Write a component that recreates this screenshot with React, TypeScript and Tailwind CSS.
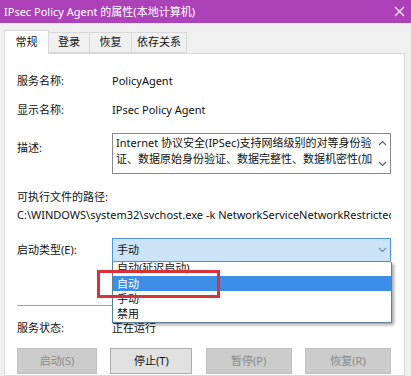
import React from "react";

const font = { fontFamily: '"Noto Sans", "Noto Sans CJK SC", sans-serif' };

const Chevron: React.FC<{ up?: boolean; color?: string }> = ({ up, color = "#606060" }) => (
  <svg width="9" height="6" viewBox="0 0 9 6">
    <path
      d={up ? "M1 5 L4.5 1.5 L8 5" : "M1 1 L4.5 4.5 L8 1"}
      fill="none"
      stroke={color}
      strokeWidth="1.1"
    />
  </svg>
);

const App: React.FC = () => {
  const tabs = [
    { label: "常规", w: "w-[45px]" },
    { label: "登录", w: "w-[41px]" },
    { label: "恢复", w: "w-[42px]" },
    { label: "依存关系", w: "w-[55px]" },
  ];

  return (
    <div
      className="w-[411px] h-[376px] overflow-hidden bg-[#f0f0f0] flex flex-col text-[11px] text-[#111]"
      style={font}
    >
      {/* Title bar */}
      <div className="h-[23px] bg-[#ad42b8] flex items-center justify-between pl-[4px] pr-[6px] text-white shrink-0">
        <span className="text-[11px] leading-none">IPsec Policy Agent 的属性(本地计算机)</span>
        <svg width="11" height="11" viewBox="0 0 11 11">
          <path d="M1 1 L10 10 M10 1 L1 10" stroke="#f4e6f6" strokeWidth="1.3" />
        </svg>
      </div>

      {/* Tabs */}
      <div className="mt-[8px] pl-[4px] flex items-end h-[22px] shrink-0">
        {tabs.map((t, i) =>
          i === 0 ? (
            <div
              key={t.label}
              className={`${t.w} h-[24px] -mb-px relative z-10 bg-white border border-b-0 border-[#d9d9d9] flex items-center justify-center`}
            >
              {t.label}
            </div>
          ) : (
            <div
              key={t.label}
              className={`${t.w} h-[21px] bg-[#f0f0f0] border border-l-0 border-[#d9d9d9] flex items-center justify-center`}
            >
              {t.label}
            </div>
          )
        )}
      </div>

      {/* Panel */}
      <div className="ml-[4px] mr-[6px] flex-1 bg-white border border-[#d9d9d9] relative">
        <div className="pl-[12px] pr-[13px] pt-[17px]">
          <div className="flex items-center h-[20px]">
            <div className="w-[95px]">服务名称:</div>
            <div>PolicyAgent</div>
          </div>
          <div className="flex items-center h-[20px] mt-[9px]">
            <div className="w-[95px]">显示名称:</div>
            <div>IPsec Policy Agent</div>
          </div>
          <div className="flex mt-[13px]">
            <div className="w-[95px] pt-[5px] leading-[20px]">描述:</div>
            <div className="flex-1 h-[41px] border border-[#8a8a8a] flex">
              <div className="flex-1 pl-[3px] pt-[1px] leading-[16px] whitespace-nowrap overflow-hidden">
                <div>Internet 协议安全(IPSec)支持网络级别的对等身份验</div>
                <div>证、数据原始身份验证、数据完整性、数据机密性(加</div>
              </div>
              <div className="w-[16px] flex flex-col items-center justify-between py-[6px]">
                <Chevron up />
                <Chevron />
              </div>
            </div>
          </div>
          <div className="mt-[14px] h-[18px] leading-[18px]">可执行文件的路径:</div>
          <div className="h-[18px] leading-[18px] whitespace-nowrap overflow-hidden">
            C:\WINDOWS\system32\svchost.exe -k NetworkServiceNetworkRestricted
          </div>
          <div className="flex items-center h-[24px] mt-[14px]">
            <div className="w-[95px]">启动类型(E):</div>
            <div className="flex-1 h-full border border-[#4f93d8] bg-[#cce4f7] flex items-center justify-between pl-[4px] pr-[3px] relative z-10">
              <span>手动</span>
              <Chevron color="#7a8a99" />
            </div>
          </div>
          <div className="mt-[43px] h-px bg-[#a0a0a0]" />
          <div className="flex items-center h-[20px] mt-[12px]">
            <div className="w-[95px]">服务状态:</div>
            <div>正在运行</div>
          </div>
          <div className="flex justify-between mt-[10px]">
            <div className="w-[80px] h-[26px] bg-[#cccccc] border border-[#bfbfbf] text-[#8a8a8a] flex items-center justify-center">
              启动(S)
            </div>
            <div className="w-[82px] h-[26px] bg-[#e1e1e1] border border-[#adadad] flex items-center justify-center">
              停止(T)
            </div>
            <div className="w-[86px] h-[26px] bg-[#cccccc] border border-[#bfbfbf] text-[#8a8a8a] flex items-center justify-center">
              暂停(P)
            </div>
            <div className="w-[86px] h-[26px] bg-[#cccccc] border border-[#bfbfbf] text-[#8a8a8a] flex items-center justify-center">
              恢复(R)
            </div>
          </div>
        </div>

        {/* Open dropdown list */}
        <div className="absolute left-[107px] top-[208px] w-[280px] h-[61px] bg-white border border-t-0 border-[#5f7f92] shadow-[2px_2px_3px_rgba(0,0,0,0.35)] overflow-hidden z-20">
          <div className="h-[14px] overflow-hidden pl-[4px]">
            <div className="leading-[15px] -mt-[2px]">自动(延迟启动)</div>
          </div>
          <div className="h-[15px] leading-[15px] pl-[4px] bg-[#3d8ee6] text-white">自动</div>
          <div className="h-[15px] leading-[15px] pl-[4px]">手动</div>
          <div className="h-[15px] leading-[15px] pl-[4px]">禁用</div>
        </div>

        {/* Red highlight box */}
        <div className="absolute left-[92px] top-[216px] w-[123px] h-[28px] border-[3px] border-[#d8333b] z-30" />
      </div>
    </div>
  );
};

export default App;
